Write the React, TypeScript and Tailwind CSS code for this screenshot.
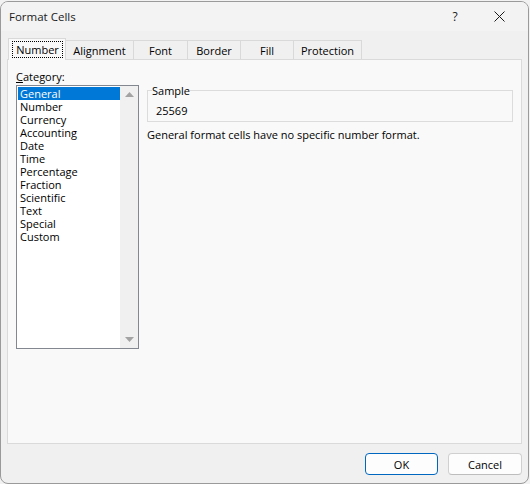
import React from "react";

const items = [
  "General",
  "Number",
  "Currency",
  "Accounting",
  "Date",
  "Time",
  "Percentage",
  "Fraction",
  "Scientific",
  "Text",
  "Special",
  "Custom",
];

const tabs = [
  { label: "Alignment", cls: "w-[68px]" },
  { label: "Font", cls: "w-[54px]" },
  { label: "Border", cls: "w-[53px]" },
  { label: "Fill", cls: "w-[53px]" },
  { label: "Protection", cls: "w-[68px]" },
];

export default function App() {
  return (
    <div className="w-[530px] h-[484px] bg-[#f2f2f2] pt-px font-['Open_Sans',sans-serif] text-[11px] leading-[13px] text-black">
      <div className="w-[529px] h-[483px] border border-[#9a9a9a] rounded-lg bg-[#f0f0f0] flex flex-col overflow-hidden">
        {/* Title bar */}
        <div className="h-[29px] bg-[#f3f3f3] flex items-center pl-2 pr-[7px]">
          <div className="flex-1 text-[11.5px] text-[#1a1a1a]">Format Cells</div>
          <div className="w-[44px] h-full flex items-center justify-center text-[12px] text-[#1a1a1a]">?</div>
          <div className="w-[44px] h-full flex items-center justify-center">
            <svg width="11" height="11" viewBox="0 0 11 11">
              <path d="M0.5 0.5 L10.5 10.5 M10.5 0.5 L0.5 10.5" stroke="#1a1a1a" strokeWidth="1" fill="none" />
            </svg>
          </div>
        </div>

        {/* Body */}
        <div className="flex-1 flex flex-col pt-[7px]">
          {/* Tabs */}
          <div className="relative z-10 flex items-end h-[22px] -mb-px pl-[7px]">
            <div className="h-[22px] w-[58px] border border-b-0 border-[#d9d9d9] bg-[#f9f9f9] pt-[2px] pl-[3px]">
              <div className="w-[51px] h-[17px] border border-dotted border-black flex items-center justify-center">
                Number
              </div>
            </div>
            {tabs.map((t) => (
              <div
                key={t.label}
                className={`${t.cls} h-[19px] mb-px border-t border-r border-[#d9d9d9] bg-[#f0f0f0] flex items-center justify-center`}
              >
                {t.label}
              </div>
            ))}
          </div>

          {/* Panel */}
          <div className="ml-[6px] w-[515px] h-[385px] border border-[#dadada] bg-[#f9f9f9] flex gap-2 px-2 pt-[10px]">
            {/* Left column */}
            <div className="w-[123px] flex flex-col">
              <div className="h-[13px]">
                <span className="underline">C</span>ategory:
              </div>
              <div className="mt-[2px] h-[264px] border border-[#828790] bg-white flex">
                <div className="w-[103px] pl-px pt-px flex flex-col">
                  {items.map((it, i) => (
                    <div
                      key={it}
                      className={
                        i === 0
                          ? "h-[13px] leading-[13px] pl-[2px] bg-[#0078d7] text-white"
                          : "h-[13px] leading-[13px] pl-[2px] text-black"
                      }
                    >
                      {it}
                    </div>
                  ))}
                </div>
                <div className="w-[18px] bg-[#f0f0f0] flex flex-col items-center justify-between pt-[6px] pb-[6px]">
                  <svg width="9" height="5" viewBox="0 0 9 5">
                    <polygon points="0,5 9,5 4.5,0" fill="#a3a3a3" />
                  </svg>
                  <svg width="9" height="5" viewBox="0 0 9 5">
                    <polygon points="0,0 9,0 4.5,5" fill="#a3a3a3" />
                  </svg>
                </div>
              </div>
            </div>

            {/* Right column */}
            <div className="flex-1 flex flex-col">
              <fieldset className="mt-[14px] border border-[#dcdcdc] pl-[4px] pb-[4px]">
                <legend className="leading-[13px]">Sample</legend>
                <div className="mt-[7px] pl-[4px] leading-[13px]">25569</div>
              </fieldset>
              <p className="mt-[6px] leading-[13px]">General format cells have no specific number format.</p>
            </div>
          </div>

          {/* Buttons */}
          <div className="mt-[9px] flex justify-end gap-[10px] pr-[6px]">
            <button className="w-[73px] h-[22px] rounded-[4px] border border-[#0067c0] bg-[#fdfdfd] flex items-center justify-center">
              OK
            </button>
            <button className="w-[74px] h-[22px] rounded-[4px] border border-[#d0d0d0] border-b-[#bdbdbd] bg-[#fdfdfd] flex items-center justify-center">
              Cancel
            </button>
          </div>
        </div>
      </div>
    </div>
  );
}
